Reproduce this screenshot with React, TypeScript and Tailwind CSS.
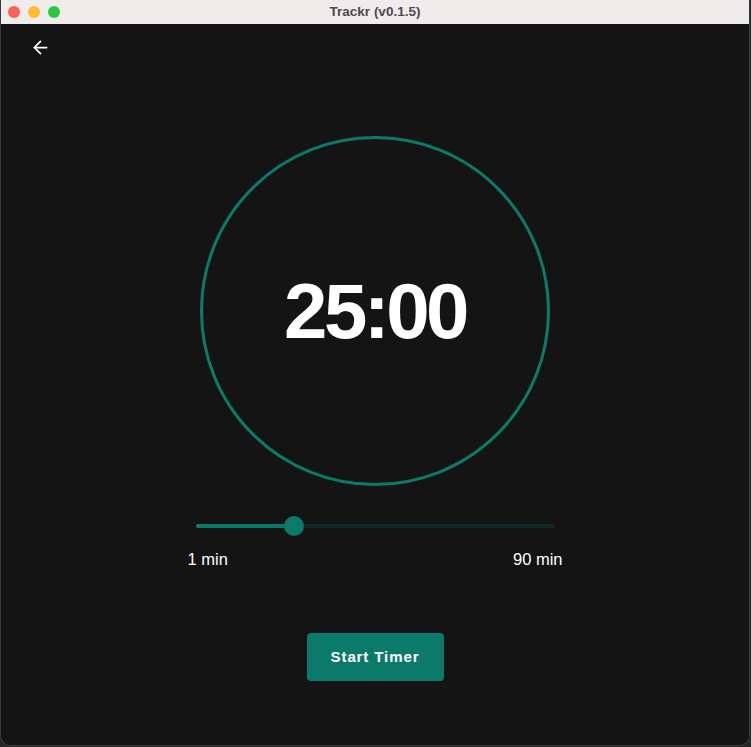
import React from "react";
import { ArrowLeft } from "lucide-react";

export default function App() {
  return (
    <div className="w-[751px] h-[747px] bg-[#262626] overflow-hidden" style={{ fontFamily: '"Liberation Sans", Arial, sans-serif' }}>
      <div className="w-[750px] h-[746px] flex flex-col rounded-b-[10px] border border-t-0 border-[#3a3a3a] bg-[#141414] overflow-hidden">
        <div className="h-[24px] bg-[#f1ecec] flex items-center relative shrink-0">
          <div className="flex gap-[8px] pl-[7px]">
            <div className="w-[12px] h-[12px] rounded-full bg-[#fe5f57]" />
            <div className="w-[12px] h-[12px] rounded-full bg-[#febc2e]" />
            <div className="w-[12px] h-[12px] rounded-full bg-[#28c840]" />
          </div>
          <div className="absolute inset-0 flex items-center justify-center text-[13.5px] font-bold text-[#4b4b4b]">
            Trackr (v0.1.5)
          </div>
        </div>
        <div className="flex-1 flex flex-col">
          <div className="pl-[29px] pt-[13px] h-[48px]">
            <ArrowLeft className="text-white" size={21} strokeWidth={2} />
          </div>
          <div className="flex flex-col items-center">
            <div className="mt-[64px] w-[350px] h-[350px] rounded-full border-[3px] border-[#0c7a6b] flex items-center justify-center">
              <span className="text-white font-bold text-[78px] tracking-[-0.045em] leading-none">25:00</span>
            </div>
            <div className="mt-[30px] w-[359px] relative h-[20px] flex items-center">
              <div className="w-full h-[4px] rounded-full bg-[#0f2a26]" />
              <div className="absolute left-0 top-[8px] w-[98px] h-[4px] rounded-full bg-[#0c7a6b]" />
              <div className="absolute left-[88px] top-0 w-[20px] h-[20px] rounded-full bg-[#0c7a6b]" />
            </div>
            <div className="mt-[11px] w-[375px] flex justify-between text-white text-[16.5px] leading-[24px]">
              <span>1 min</span>
              <span>90 min</span>
            </div>
            <button className="mt-[62px] w-[137px] h-[48px] rounded-[4px] bg-[#0c7a6b] text-white text-[15px] font-bold tracking-[0.06em]">
              Start Timer
            </button>
          </div>
        </div>
      </div>
    </div>
  );
}
